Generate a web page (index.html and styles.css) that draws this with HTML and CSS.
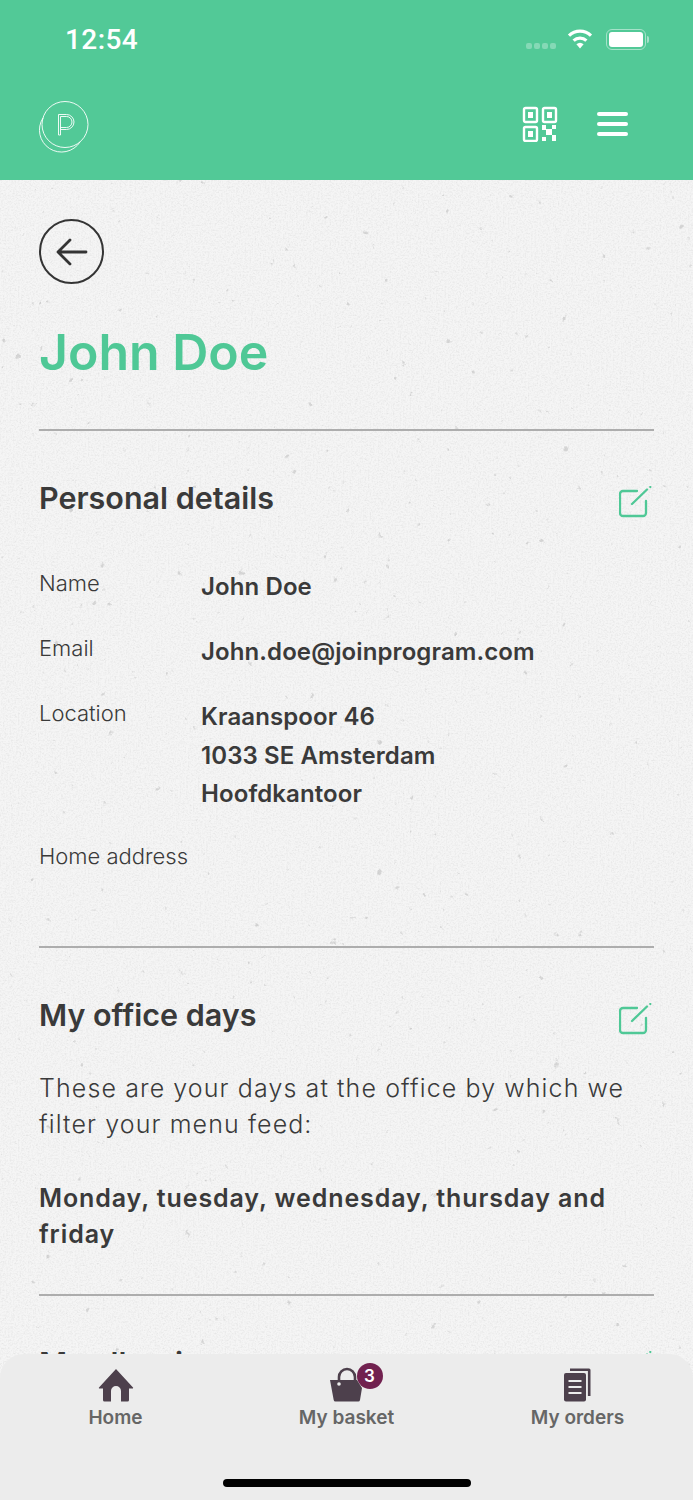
FILE: index.html
```html
<!DOCTYPE html>
<html lang="en">
<head>
    <meta charset="UTF-8">
    <meta name="viewport" content="width=device-width, initial-scale=1.0">
    <title>Profile</title>
    <link rel="stylesheet" href="styles.css">
</head>
<body>
<div class="screen">

    <svg class="paper" width="693" height="1500" aria-hidden="true">
        <filter id="grain" x="0" y="0" width="100%" height="100%">
            <feTurbulence type="fractalNoise" baseFrequency="0.6" numOctaves="3" seed="3"/>
            <feColorMatrix type="matrix" values="0 0 0 0 0.5  0 0 0 0 0.5  0 0 0 0 0.5  0.35 0.35 0 0 -0.3"/>
        </filter>
        <filter id="specks" x="0" y="0" width="100%" height="100%">
            <feTurbulence type="fractalNoise" baseFrequency="0.13" numOctaves="4" seed="21"/>
            <feColorMatrix type="matrix" values="0 0 0 0 0.42  0 0 0 0 0.42  0 0 0 0 0.42  6 6 0 0 -8.4"/>
        </filter>
        <rect width="693" height="1500" filter="url(#grain)"/>
        <rect width="693" height="1500" filter="url(#specks)" opacity="0.42"/>
    </svg>

    <header class="header">
        <div class="status">
            <span class="time">12:54</span>
            <div class="status-icons">
                <div class="signal"><i></i><i></i><i></i><i></i></div>
                <svg class="wifi" width="28" height="22" viewBox="0 0 28 22">
                    <path d="M14 20.500l-3.600-4.200a5.400 5.400 0 0 1 7.200 0z" fill="#fff"/>
                    <path d="M7.600 12.600a9.400 9.400 0 0 1 12.800 0M3 7.600a16 16 0 0 1 22 0" fill="none" stroke="#fff" stroke-width="3.200"/>
                </svg>
                <div class="battery"><div class="battery-fill"></div></div>
                <div class="battery-cap"></div>
            </div>
        </div>
        <div class="topbar">
            <svg class="logo" width="50" height="54" viewBox="0 0 50 54" fill="none" stroke="#fff" stroke-width="0.9">
                <circle cx="26" cy="24.500" r="23"/>
                <path d="M4 18A22 22 0 0 0 41 42"/>
                <path d="M19.500 35V14.500h8a6.500 6.500 0 0 1 0 15h-6M21.500 35V16.500h6a4.500 4.500 0 0 1 0 11h-6M19.500 35h2"/>
            </svg>
            <div class="topbar-actions">
                <svg width="36" height="36" viewBox="0 0 36 36">
                    <g fill="none" stroke="#fff" stroke-width="2.400">
                        <rect x="2" y="2" width="13" height="14" rx="1.500"/>
                        <rect x="21" y="2" width="13" height="14" rx="1.500"/>
                        <rect x="2" y="21" width="13" height="14" rx="1.500"/>
                    </g>
                    <g fill="#fff">
                        <rect x="6" y="6" width="5" height="6"/>
                        <rect x="25" y="6" width="5" height="6"/>
                        <rect x="6" y="25" width="5" height="6"/>
                        <rect x="20" y="19" width="4" height="5"/>
                        <rect x="30" y="19" width="4" height="4"/>
                        <rect x="24" y="23" width="6" height="6"/>
                        <rect x="30" y="29" width="4" height="6"/>
                        <rect x="20" y="31" width="4" height="4"/>
                    </g>
                </svg>
                <div class="menu"><i></i><i></i><i></i></div>
            </div>
        </div>
    </header>

    <main class="content">
        <div class="back">
            <svg width="34" height="30" viewBox="0 0 34 30" fill="none" stroke="#343434" stroke-width="2.800" stroke-linecap="round" stroke-linejoin="round">
                <path d="M31 15H3M15 3L3 15l12 12"/>
            </svg>
        </div>
        <h1 class="title">John Doe</h1>

        <section class="block block-details">
            <div class="block-head">
                <h2>Personal details</h2>
                <svg class="edit" width="34" height="34" viewBox="0 0 34 34" fill="none" stroke="#4fc896" stroke-width="2.300" stroke-linecap="round">
                    <path d="M18 5H4a3 3 0 0 0-3 3v19a3 3 0 0 0 3 3h20a3 3 0 0 0 3-3V15"/>
                    <path d="M13 18L28 3.500M31.300 1v.01"/>
                </svg>
            </div>
            <div class="details">
                <div class="label">Name</div>
                <div class="value">John Doe</div>
                <div class="label">Email</div>
                <div class="value">John.doe@joinprogram.com</div>
                <div class="label">Location</div>
                <div class="value">Kraanspoor 46<br>1033 SE Amsterdam<br>Hoofdkantoor</div>
                <div class="label label-wide">Home address</div>
            </div>
        </section>

        <section class="block block-days">
            <div class="block-head">
                <h2>My office days</h2>
                <svg class="edit" width="34" height="34" viewBox="0 0 34 34" fill="none" stroke="#4fc896" stroke-width="2.300" stroke-linecap="round">
                    <path d="M18 5H4a3 3 0 0 0-3 3v19a3 3 0 0 0 3 3h20a3 3 0 0 0 3-3V15"/>
                    <path d="M13 18L28 3.500M31.300 1v.01"/>
                </svg>
            </div>
            <p class="text">These are your days at the office by which we filter your menu feed:</p>
            <p class="text text-strong">Monday, tuesday, wednesday, thursday and friday</p>
        </section>

        <section class="block block-last">
            <div class="block-head">
                <h2>My allergies</h2>
                <svg class="edit" width="34" height="34" viewBox="0 0 34 34" fill="none" stroke="#4fc896" stroke-width="2.300" stroke-linecap="round">
                    <path d="M18 5H4a3 3 0 0 0-3 3v19a3 3 0 0 0 3 3h20a3 3 0 0 0 3-3V15"/>
                    <path d="M13 18L28 3.500M31.300 1v.01"/>
                </svg>
            </div>
        </section>
    </main>

    <nav class="tabbar">
        <div class="tabs">
            <a class="tab">
                <svg width="36" height="36" viewBox="0 0 36 36">
                    <path d="M18 2L35 20.500a.6.6 0 0 1-.5 1H31V33a1.500 1.500 0 0 1-1.500 1.500H23V24a5 5 0 0 0-10 0v10.500H6.500A1.500 1.500 0 0 1 5 33V21.500H1.500a.6.6 0 0 1-.5-1z" fill="#4d404c"/>
                </svg>
                <span>Home</span>
            </a>
            <a class="tab">
                <span class="tab-icon">
                    <svg width="36" height="36" viewBox="0 0 36 36">
                        <path d="M1 13h27l5 8-2 12a1.800 1.800 0 0 1-1.800 1.500H6.500A1.800 1.800 0 0 1 4.700 33z" fill="#4d404c"/>
                        <path d="M10 14V10a8 8 0 0 1 16 0v6" fill="none" stroke="#4d404c" stroke-width="2.600"/>
                        <circle cx="10" cy="17" r="1.800" fill="#ececec"/>
                    </svg>
                    <span class="badge">3</span>
                </span>
                <span>My basket</span>
            </a>
            <a class="tab">
                <svg width="36" height="36" viewBox="0 0 36 36">
                    <path d="M10 1.500h19a1.500 1.500 0 0 1 1.500 1.500v26h-2.600V4H10z" fill="#4d404c"/>
                    <rect x="4" y="6" width="22" height="28.500" rx="2" fill="#4d404c"/>
                    <path d="M8.500 14H21.500M8.500 20H21.500M8.500 26H21.500" stroke="#ececec" stroke-width="2"/>
                </svg>
                <span>My orders</span>
            </a>
        </div>
        <div class="home-indicator"></div>
    </nav>

</div>
</body>
</html>
```

FILE: styles.css
```css
* {
    box-sizing: border-box;
}

html, body {
    margin: 0;
    padding: 0;
}

body {
    font-family: Inter, Lato, sans-serif;
    color: #3a3a3a;
}

.screen {
    position: relative;
    width: 693px;
    height: 1500px;
    overflow: hidden;
    background-color: #f5f5f5;
}

.paper {
    position: absolute;
    left: 0;
    top: 0;
}

/* header */
.header {
    position: relative;
    height: 180px;
    background-color: #52c997;
    color: #fff;
    padding: 20px 44px 0 39px;
}

.status {
    display: flex;
    justify-content: space-between;
    align-items: center;
    height: 38px;
    padding-left: 26px;
}

.time {
    font-family: Roboto, sans-serif;
    font-size: 28px;
    font-weight: 500;
    letter-spacing: 0.4px;
}

.status-icons {
    display: flex;
    align-items: center;
}

.signal {
    display: flex;
    gap: 2px;
    margin: 14px 10px 0 0;
}

.signal i {
    width: 6px;
    height: 6px;
    border-radius: 2px;
    background-color: #85d9b6;
}

.wifi {
    margin-right: 12px;
}

.battery {
    width: 40px;
    height: 21px;
    padding: 2px;
    border: 1.500px solid #a5e2c9;
    border-radius: 6px;
}

.battery-fill {
    height: 100%;
    background-color: #fff;
    border-radius: 3px;
}

.battery-cap {
    width: 2px;
    height: 7px;
    margin-left: 1px;
    background-color: #a5e2c9;
    border-radius: 0 2px 2px 0;
}

.topbar {
    display: flex;
    justify-content: space-between;
    align-items: center;
    margin-top: 42px;
    padding-right: 21px;
}

.topbar-actions {
    display: flex;
    align-items: center;
    gap: 39px;
    margin-top: -6px;
}

.menu {
    display: flex;
    flex-direction: column;
    gap: 6px;
}

.menu i {
    display: block;
    width: 31px;
    height: 4px;
    border-radius: 2px;
    background-color: #fff;
}

/* content */
.content {
    position: relative;
    padding: 39px 39px 0;
}

.back {
    display: flex;
    align-items: center;
    justify-content: center;
    width: 65px;
    height: 65px;
    border: 2.800px solid #343434;
    border-radius: 50%;
}

.title {
    margin: 38px 0 0;
    font-size: 50px;
    line-height: 60px;
    font-weight: 600;
    color: #4fc896;
}

.block {
    border-top: 2px solid #adadad;
}

.block-details {
    margin-top: 47px;
    padding-top: 45px;
}

.block-days {
    margin-top: 76px;
    padding-top: 45px;
}

.block-last {
    margin-top: 42px;
    padding-top: 45px;
}

.block-head {
    display: flex;
    justify-content: space-between;
    align-items: center;
    height: 44px;
    padding-right: 1px;
}

.block-head h2 {
    margin: 0;
    font-size: 30.500px;
    font-weight: 600;
    line-height: 44px;
}

.edit {
    margin-top: 9px;
}

.details {
    display: grid;
    grid-template-columns: 162px 1fr;
    row-gap: 26.500px;
    margin-top: 48px;
}

.label {
    font-size: 22px;
    line-height: 28px;
    font-weight: 300;
    margin-top: 1px;
}

.label-wide {
    grid-column: 1 / 3;
    margin-top: 2px;
}

.value {
    font-size: 24px;
    line-height: 38.500px;
    font-weight: 600;
    letter-spacing: 0.1px;
}

.text {
    margin: 33px 0 0;
    font-size: 25px;
    line-height: 36px;
    font-weight: 300;
    letter-spacing: 1.100px;
}

.text-strong {
    margin-top: 38px;
    font-weight: 600;
    letter-spacing: 0.9px;
}

/* bottom tabs */
.tabbar {
    position: absolute;
    left: 0;
    right: 0;
    bottom: 0;
    height: 146px;
    background-color: #ececec;
    border-radius: 24px 24px 0 0;
}

.tabs {
    display: grid;
    grid-template-columns: repeat(3, 231px);
    padding-top: 13px;
}

.tab {
    display: flex;
    flex-direction: column;
    align-items: center;
    font-size: 19px;
    line-height: 30px;
    font-weight: 600;
    color: #666;
}

.tab-icon {
    position: relative;
    display: block;
    height: 36px;
}

.badge {
    position: absolute;
    left: 28px;
    top: -4px;
    width: 26px;
    height: 26px;
    border-radius: 50%;
    background-color: #71214f;
    color: #fff;
    font-size: 17px;
    line-height: 26px;
    text-align: center;
}

.home-indicator {
    position: absolute;
    left: 223px;
    bottom: 13px;
    width: 248px;
    height: 8px;
    border-radius: 4px;
    background-color: #000;
}
```
